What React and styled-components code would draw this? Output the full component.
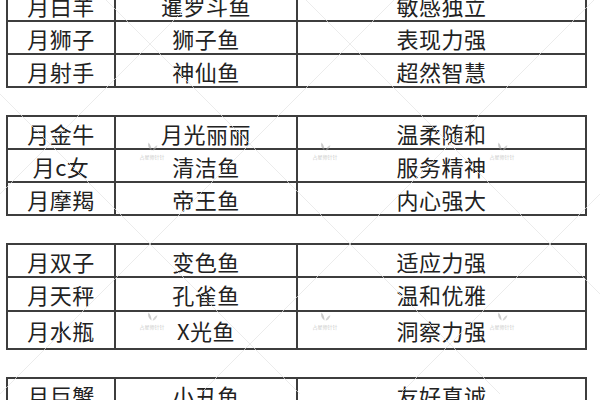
import React from "react";
import styled, { createGlobalStyle } from "styled-components";

const groups = [
  {
    heights: [31, 31, 31],
    rows: [
      ["月白羊", "暹罗斗鱼", "敏感独立"],
      ["月狮子", "狮子鱼", "表现力强"],
      ["月射手", "神仙鱼", "超然智慧"],
    ],
  },
  {
    heights: [31, 31, 31],
    rows: [
      ["月金牛", "月光丽丽", "温柔随和"],
      ["月c女", "清洁鱼", "服务精神"],
      ["月摩羯", "帝王鱼", "内心强大"],
    ],
  },
  {
    heights: [31, 32, 36],
    rows: [
      ["月双子", "变色鱼", "适应力强"],
      ["月天秤", "孔雀鱼", "温和优雅"],
      ["月水瓶", "X光鱼", "洞察力强"],
    ],
  },
  {
    heights: [31],
    rows: [["月巨蟹", "小丑鱼", "友好真诚"]],
  },
];

const marks = [
  [152, 150],
  [325, 150],
  [502, 150],
  [152, 320],
  [325, 320],
  [502, 320],
];

const GlobalStyle = createGlobalStyle`
  html, body {
    margin: 0;
    padding: 0;
    background: #ffffff;
    height: 400px;
    overflow: hidden;
  }
  body {
    font-family: "Noto Sans CJK SC", "Noto Sans", sans-serif;
  }
`;

const Page = styled.div`
  position: relative;
  width: 600px;
  height: 400px;
  overflow: hidden;
  background: #fff;
`;

const Stack = styled.div`
  display: flex;
  flex-direction: column;
  gap: 27px;
  margin-top: -13px;
  padding-left: 6px;
`;

const Group = styled.div`
  display: grid;
  grid-template-columns: 106px 180px 287px;
  gap: 2px;
  padding: 2px;
  width: 581px;
  box-sizing: border-box;
  background: #3d3d3d;
`;

const Cell = styled.div`
  height: ${(p) => p.$h}px;
  background: #fff;
  display: flex;
  align-items: center;
  justify-content: center;
  font-size: 22px;
  color: #222;
  letter-spacing: 0.5px;
  line-height: 1;
`;

const Overlay = styled.svg`
  position: absolute;
  left: 0;
  top: 0;
  pointer-events: none;
`;

const Mark = styled.div`
  position: absolute;
  display: flex;
  flex-direction: column;
  align-items: center;
  transform: translate(-50%, -50%);
  pointer-events: none;
  opacity: 0.55;
`;

const MarkText = styled.span`
  font-size: 5px;
  color: #9a9a9a;
  line-height: 1;
  margin-top: 2px;
  white-space: nowrap;
`;

const Leaf = () => (
  <svg width="12" height="10" viewBox="0 0 12 10">
    <path d="M5 9 C2 7 1 4 2 1 C4 3 5 6 5 9 Z" fill="#a0a0a0" />
    <path d="M6 9 C7 6 9 4 11 4 C10 7 8 9 6 9 Z" fill="#b0b0b0" />
  </svg>
);

const Watermark = ({ x, y }) => (
  <Mark style={{ left: x, top: y }}>
    <Leaf />
    <MarkText>占星师针针</MarkText>
  </Mark>
);

export default function App() {
  return (
    <Page>
      <GlobalStyle />
      <Stack>
        {groups.map((g, gi) => (
          <Group key={gi}>
            {g.rows.map((row, ri) =>
              row.map((text, ci) => (
                <Cell key={`${ri}-${ci}`} $h={g.heights[ri]}>
                  {text}
                </Cell>
              ))
            )}
          </Group>
        ))}
      </Stack>
      <Overlay width="600" height="400">
        <g stroke="#e4e4e4" strokeWidth="1" opacity="0.7">
          <line x1="-100" y1="-6" x2="300" y2="394" />
          <line x1="100" y1="-6" x2="500" y2="394" />
          <line x1="300" y1="-6" x2="700" y2="394" />
          <line x1="200" y1="-6" x2="-200" y2="394" />
          <line x1="400" y1="-6" x2="0" y2="394" />
          <line x1="600" y1="-6" x2="200" y2="394" />
          <line x1="800" y1="-6" x2="400" y2="394" />
        </g>
      </Overlay>
      {marks.map(([x, y], i) => (
        <Watermark key={i} x={x} y={y} />
      ))}
    </Page>
  );
}
